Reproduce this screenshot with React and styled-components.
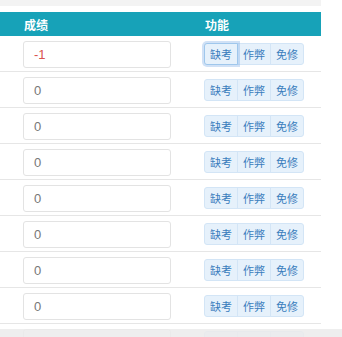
import React from 'react';
import styled, { createGlobalStyle } from 'styled-components';

const Global = createGlobalStyle`
  html, body { margin: 0; padding: 0; background: #fff; }
  body { font-family: "Noto Sans CJK SC", "Liberation Sans", sans-serif; overflow: hidden; }
`;

const Page = styled.div`
  width: 321px;
  height: 337px;
  position: relative;
  overflow: hidden;
`;

const TopBar = styled.div`
  height: 6px;
  background: #f3f3f3;
  margin-bottom: 6px;
`;

const Head = styled.div`
  display: grid;
  grid-template-columns: 181px 1fr;
  height: 24px;
  align-items: center;
  background: #17a2b8;
  color: #fff;
  font-size: 12px;
  font-weight: bold;
  padding-left: 24px;
`;

const Row = styled.div`
  display: grid;
  grid-template-columns: 148px 1fr;
  column-gap: 33px;
  align-items: center;
  height: 36px;
  padding: 1px 0 0 23px;
  border-bottom: 1px solid #e6e6e6;
  box-sizing: border-box;
`;

const Score = styled.div`
  height: 27px;
  box-sizing: border-box;
  border: 1px solid #e3e3e3;
  border-radius: 3px;
  padding-left: 10px;
  display: flex;
  align-items: center;
  font-family: "Liberation Sans", sans-serif;
  font-size: 13px;
  color: ${p => (p.neg ? '#d9534f' : '#777')};
`;

const Group = styled.div`
  display: flex;
`;

const Btn = styled.div`
  width: 34px;
  height: 22px;
  box-sizing: border-box;
  display: flex;
  align-items: center;
  justify-content: center;
  background: #e6f1fb;
  border: 1px solid #d3e5f6;
  margin-left: -1px;
  font-size: 11px;
  color: #3a7dbd;
  &:first-child { margin-left: 0; border-radius: 3px 0 0 3px; }
  &:last-child { border-radius: 0 3px 3px 0; }
  ${p => p.active && `
    position: relative;
    z-index: 1;
    border-color: #9fc7ec;
    box-shadow: 0 0 0 2px rgba(120, 170, 230, 0.35);
  `}
`;

const Shade = styled.div`
  position: fixed;
  left: 0;
  right: 0;
  top: 329px;
  height: 8px;
  background: rgba(235, 235, 235, 0.85);
`;

const scores = ['-1', '0', '0', '0', '0', '0', '0', '0', '0'];

export default function App() {
  return (
    <Page>
      <Global />
      <TopBar />
      <Head>
        <span>成绩</span>
        <span>功能</span>
      </Head>
      {scores.map((s, i) => (
        <Row key={i}>
          <Score neg={s.startsWith('-')}>{s}</Score>
          <Group>
            <Btn active={i === 0}>缺考</Btn>
            <Btn>作弊</Btn>
            <Btn>免修</Btn>
          </Group>
        </Row>
      ))}
      <Shade />
    </Page>
  );
}
